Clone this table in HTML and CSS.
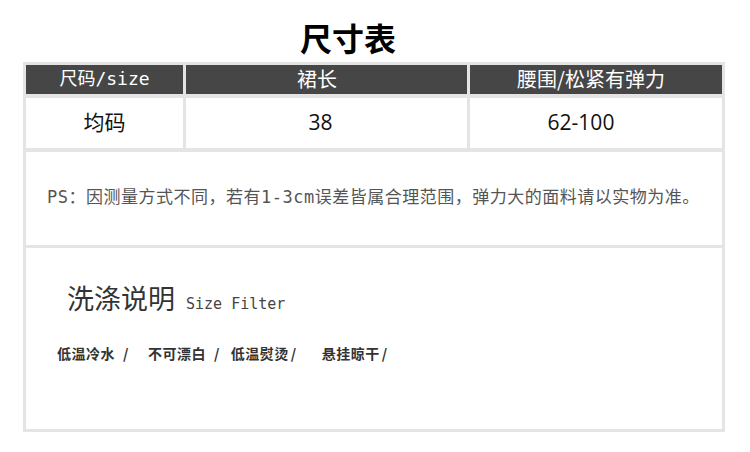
FILE: index.html
```html
<!DOCTYPE html>
<html lang="zh-CN">
<head>
<meta charset="utf-8">
<link rel="stylesheet" href="styles.css">
</head>
<body>
<div class="page">
  <h1 class="title">尺寸表</h1>
  <div class="sheet">
    <div class="grid">
      <div class="cell head mono">尺码/size</div>
      <div class="cell head c2">裙长</div>
      <div class="cell head c3">腰围/松紧有弹力</div>
      <div class="cell data">均码</div>
      <div class="cell data d2">38</div>
      <div class="cell data d3">62-100</div>
    </div>
    <div class="note">PS：因测量方式不同，若有1-3cm误差皆属合理范围，弹力大的面料请以实物为准。</div>
    <div class="wash">
      <div class="wash-title"><span class="wash-cn">洗涤说明</span><span class="wash-en">Size Filter</span></div>
      <div class="wash-items">
        <span class="item i1">低温冷水<span class="sl">/</span></span>
        <span class="item i2">不可漂白<span class="sl">/</span></span>
        <span class="item i3">低温熨烫<span class="sl s3">/</span></span>
        <span class="item">悬挂晾干<span class="sl s3">/</span></span>
      </div>
    </div>
  </div>
</div>
</body>
</html>
```

FILE: styles.css
```css
* { box-sizing: border-box; }
html, body { margin: 0; padding: 0; background: #fff; }
body { font-family: "Noto Sans CJK SC", "Noto Sans", sans-serif; }
.page { width: 750px; height: 452px; }
.title {
  margin: 0;
  height: 62px;
  padding-top: 16px;
  padding-right: 54px;
  text-align: center;
  font-size: 32px;
  line-height: 42px;
  font-weight: 700;
  color: #000;
}
.sheet {
  margin-left: 23px;
  width: 702px;
  background: #e4e4e4;
  padding: 3px;
  display: flex;
  flex-direction: column;
  gap: 3px;
}
.grid {
  display: grid;
  grid-template-columns: 157px 281px 252px;
  grid-template-rows: 29px 50px;
  column-gap: 3px;
  row-gap: 4px;
}
.cell {
  display: flex;
  align-items: center;
  justify-content: center;
}
.head {
  background: #464646;
  color: #fff;
  font-size: 20px;
  font-weight: 400;
  line-height: 1;
  padding-bottom: 1px;
}
.c2 { padding-right: 19px; }
.c3 { padding-right: 10px; }
.mono { font-family: "DejaVu Sans Mono", "Noto Sans CJK SC", monospace; font-size: 18px; }
.data {
  background: #fff;
  color: #111;
  font-family: "Open Sans", "Noto Sans CJK SC", sans-serif;
  font-size: 21px;
  line-height: 1;
  padding-bottom: 2px;
}
.d2 { padding-right: 12px; }
.d3 { padding-right: 30px; }
.note {
  margin-top: 1px;
  height: 93px;
  background: #fff;
  display: flex;
  align-items: center;
  padding-left: 21px;
  padding-bottom: 6px;
  font-family: "DejaVu Sans Mono", "Noto Sans CJK SC", monospace;
  font-size: 17px;
  color: #555;
  letter-spacing: 0.5px;
  white-space: nowrap;
}
.wash {
  height: 181px;
  background: #fff;
  padding: 30px 0 0 41px;
}
.wash-title {
  display: flex;
  align-items: baseline;
  gap: 11px;
  height: 40px;
}
.wash-cn { font-size: 27px; color: #333; line-height: 40px; }
.wash-en { font-family: "DejaVu Sans Mono", monospace; font-size: 15px; color: #444; }
.wash-items {
  margin-top: 26px;
  margin-left: -10px;
  display: flex;
  font-size: 14px;
  font-weight: 700;
  color: #333;
  letter-spacing: 0.5px;
  line-height: 18px;
}
.item { display: inline-flex; white-space: nowrap; }
.sl { margin-left: 8px; font-weight: 700; }
.s3 { margin-left: 2px; }
.i1 { margin-right: 19px; }
.i2 { margin-right: 11px; }
.i3 { margin-right: 25px; }
```
